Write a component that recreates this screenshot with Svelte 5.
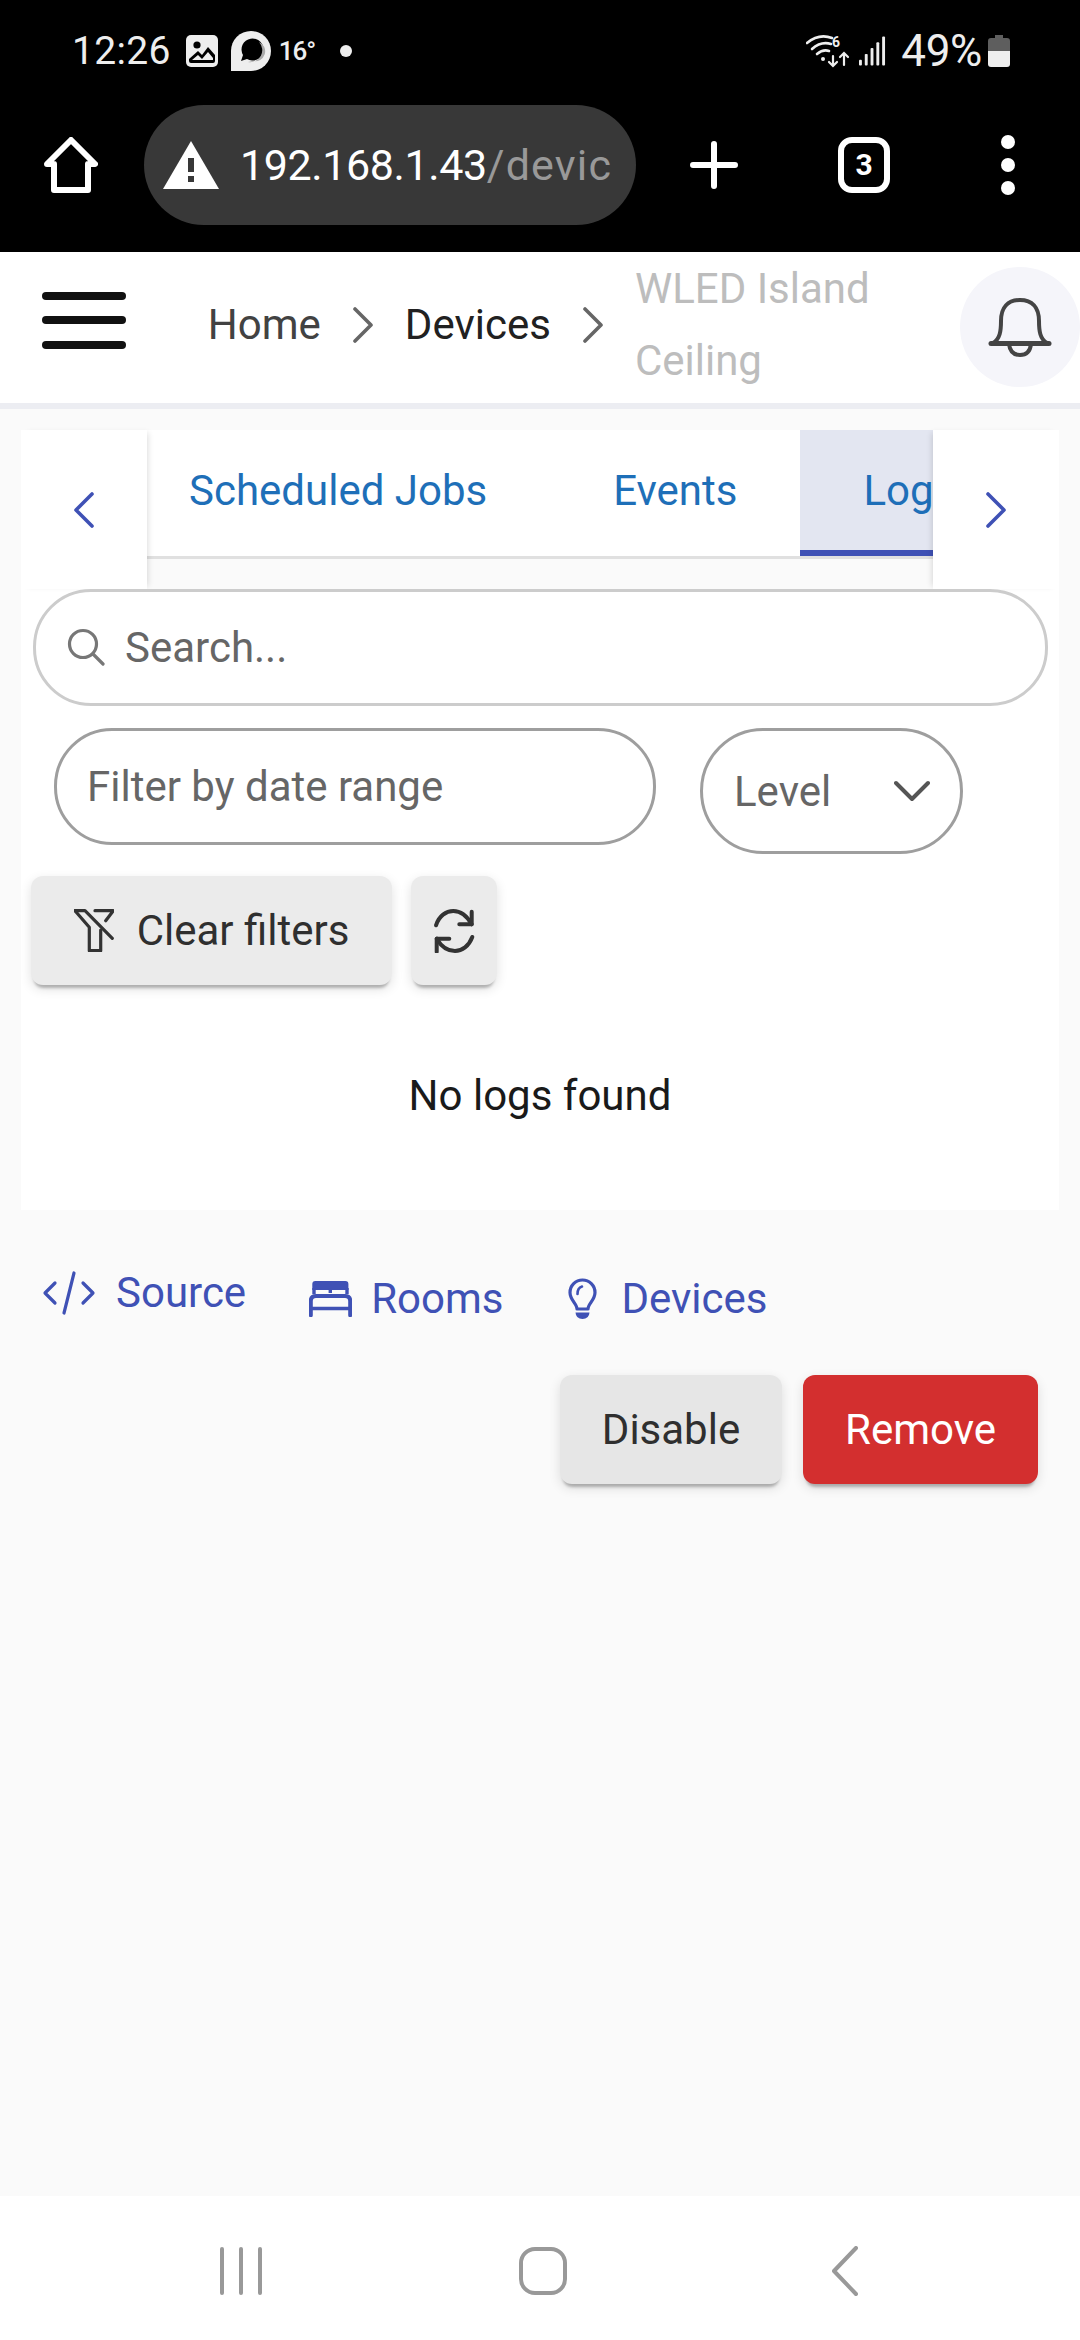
<script>
  const tabs = ['Scheduled Jobs', 'Events', 'Logs'];
</script>

<div class="screen">
  <div class="status">
    <div class="st-left">
      <span class="time">12:26</span>
      <svg class="ic-photo" viewBox="0 0 32 32"><rect width="32" height="32" rx="5" fill="#eee"/><circle cx="11" cy="10" r="3.6" fill="#000"/><path d="M3 26 L3 24 L12 16 L16 20 L22 12 L29 20 L29 26 Q29 28 27 28 L5 28 Q3 28 3 26Z" fill="#000"/><path d="M6 25 L12 20 L16 24 L22 17 L27 23 L27 25Z" fill="#eee"/></svg>
      <svg class="ic-chat" viewBox="0 0 40 40"><path d="M0 40 V20 A20 20 0 1 1 20 40Z" fill="#eee"/><path d="M10 30 L12 24 A11 11 0 1 1 16 28Z" fill="#000"/><path d="M28 11 A12 12 0 0 1 17 31 L22 30 A10 10 0 0 0 28 11Z" fill="#aaa"/></svg>
      <span class="temp">16°</span>
      <span class="dot"></span>
    </div>
    <div class="st-right">
      <svg class="ic-wifi" viewBox="0 0 44 34" fill="none" stroke="#eee" stroke-linecap="round"><path d="M1 9 Q13 -1 26 4" stroke-width="2.6"/><path d="M6 15 Q15 7 25 10" stroke-width="2.6"/><path d="M11 20 Q17 15 23 17" stroke-width="2.6"/><circle cx="17" cy="25" r="2" fill="#eee" stroke="none"/><path d="M27 22 V31 M23 28 L27 32 L31 28" stroke-width="2.2"/><path d="M38 19 V31 M34 23 L38 19 L42 23" stroke-width="2.2"/><text x="26" y="13" font-size="14" font-weight="700" fill="#eee" stroke="none" font-family="Roboto, sans-serif">6</text></svg>
      <svg class="ic-signal" viewBox="0 0 28 30" fill="#eee"><rect x="0" y="24" width="3" height="6" rx="1"/><rect x="6" y="18" width="3" height="12" rx="1"/><rect x="12" y="12" width="3" height="18" rx="1"/><rect x="18" y="6" width="3" height="24" rx="1"/><rect x="24" y="0" width="3" height="30" rx="1"/></svg>
      <span class="batt">49%</span>
      <svg class="ic-batt" viewBox="0 0 22 32"><path d="M7 0 H15 V3 H19 Q22 3 22 6 V16 H0 V6 Q0 3 3 3 H7Z" fill="#5e5e5e"/><path d="M0 16 H22 V29 Q22 32 19 32 H3 Q0 32 0 29Z" fill="#eee"/></svg>
    </div>
  </div>

  <div class="browser">
    <svg class="ic-home" viewBox="0 0 54 56" fill="none" stroke="#fff" stroke-width="6" stroke-linejoin="round"><path d="M27 3 L51 27 H44 V53 H10 V27 H3Z"/></svg>
    <div class="url">
      <svg class="ic-warn" viewBox="0 0 56 48"><path d="M28 0 L56 48 H0Z" fill="#fff"/><rect x="25" y="17" width="6" height="14" fill="#383838"/><rect x="25" y="35" width="6" height="6" fill="#383838"/></svg>
      <span class="host">192.168.1.43</span><span class="path">/devic</span>
    </div>
    <svg class="ic-plus" viewBox="0 0 48 48" stroke="#fff" stroke-width="6" stroke-linecap="round"><path d="M24 3 V45 M3 24 H45"/></svg>
    <div class="tabcount">3</div>
    <div class="menu"><i></i><i></i><i></i></div>
  </div>

  <header class="head">
    <div class="burger"><i></i><i></i><i></i></div>
    <nav class="crumbs">
      <span class="c-home">Home</span>
      <svg class="chev" viewBox="0 0 22 36" fill="none" stroke="#666" stroke-width="3.6" stroke-linecap="round" stroke-linejoin="round"><path d="M3 2 L19 18 L3 34"/></svg>
      <span class="c-dev">Devices</span>
      <svg class="chev" viewBox="0 0 22 36" fill="none" stroke="#666" stroke-width="3.6" stroke-linecap="round" stroke-linejoin="round"><path d="M3 2 L19 18 L3 34"/></svg>
      <span class="c-cur">WLED Island Ceiling</span>
    </nav>
    <div class="bell">
      <svg viewBox="0 0 64 60" fill="none" stroke="#444" stroke-width="4" stroke-linecap="round" stroke-linejoin="round"><path d="M3 46.5 H61" stroke-width="5"/><path d="M5 46 C12 42 13 34 13 24 C13 10 20 3 32 3 C44 3 51 10 51 24 C51 34 52 42 59 46"/><path d="M21 47 C22 56 27 58 32 58 C37 58 42 56 43 47"/></svg>
    </div>
  </header>

  <main class="main">
    <section class="card">
      <div class="tabbar">
        <div class="scroll-btn">
          <svg viewBox="0 0 22 36" fill="none" stroke="#3f51b5" stroke-width="3.6" stroke-linecap="round" stroke-linejoin="round"><path d="M19 2 L3 18 L19 34"/></svg>
        </div>
        <div class="tabs-wrap">
          <div class="tabs">
            {#each tabs as t, i}
              <div class="tab" class:active={i === 2}>{t}</div>
            {/each}
          </div>
        </div>
        <div class="scroll-btn right">
          <svg viewBox="0 0 22 36" fill="none" stroke="#3f51b5" stroke-width="3.6" stroke-linecap="round" stroke-linejoin="round"><path d="M3 2 L19 18 L3 34"/></svg>
        </div>
      </div>

      <div class="search">
        <svg viewBox="0 0 38 38" fill="none" stroke="#777" stroke-width="3.2" stroke-linecap="round"><circle cx="16" cy="16" r="13.5"/><path d="M26 26 L36 36"/></svg>
        <span>Search...</span>
      </div>

      <div class="filters">
        <div class="date">Filter by date range</div>
        <div class="level">
          <span>Level</span>
          <svg viewBox="0 0 36 22" fill="none" stroke="#555" stroke-width="4" stroke-linecap="round" stroke-linejoin="round"><path d="M2 3 L18 19 L34 3"/></svg>
        </div>
      </div>

      <div class="actions">
        <button class="btn clear">
          <svg viewBox="0 0 40 43" fill="none" stroke="#333" stroke-width="3.2" stroke-linecap="round" stroke-linejoin="round"><path d="M1 1.7 H11 L38.3 29.3"/><path d="M1 1.7 L15.3 18.3 V41.7 H26.7 V21"/><path d="M21 1.7 H39.3 L31.7 11.7"/></svg>
          Clear filters
        </button>
        <button class="btn refresh">
          <svg viewBox="0 0 42 44" fill="none" stroke="#333" stroke-width="4" stroke-linecap="round" stroke-linejoin="round"><path d="M3 16.3 C6 7 13 2 20.3 2 C28 2 34 7 38.7 15.3"/><path d="M38.7 2.7 V15.3 H26.3"/><path d="M39.3 28 C36 37 29 42 22 42 C14 42 8 37 3.7 29.7"/><path d="M3.7 42.7 V29.7 H16.3"/></svg>
        </button>
      </div>

      <p class="empty">No logs found</p>
    </section>

    <div class="links">
      <a class="lnk src">
        <svg class="i-code" viewBox="0 0 54 44" fill="none" stroke="#3f51b5" stroke-width="3.2" stroke-linecap="round" stroke-linejoin="round"><path d="M13 12 L3 22 L13 32 M41 12 L51 22 L41 32 M32 2 L22 42"/></svg>
        Source
      </a>
      <a class="lnk">
        <svg class="i-bed" viewBox="0 0 43 36" fill="none" stroke="#3f51b5" stroke-linecap="round"><path d="M3.3 9 V3 Q3.3 0 6.3 0 H36.4 Q39.4 0 39.4 3 V9Z" fill="#3f51b5" stroke="none"/><path d="M5 7 V13 M38 7 V13 M21.3 7 V12" stroke-width="3.4" stroke-linecap="butt"/><path d="M1.8 34.2 V20 Q1.8 15 7 15 H36 Q41.2 15 41.2 20 V34.2" stroke-width="4"/><path d="M1.8 27.5 H41.2" stroke-width="3.6" stroke-linecap="butt"/></svg>
        Rooms
      </a>
      <a class="lnk">
        <svg class="i-bulb" viewBox="0 0 29 41" fill="none" stroke="#3f51b5" stroke-width="3.2" stroke-linejoin="round"><path d="M9 31 C9 26 2 22 2 14.5 A12.5 12.5 0 0 1 27 14.5 C27 22 20 26 20 31Z"/><path d="M9.5 16 Q9.5 10 14 8.6" stroke-width="2.6" stroke-linecap="round"/><path d="M7.5 34.5 H21.5 Q21 41 14.5 41 Q8 41 7.5 34.5Z" fill="#3f51b5" stroke="none"/></svg>
        Devices
      </a>
    </div>

    <div class="bottom-actions">
      <button class="btn disable">Disable</button>
      <button class="btn remove">Remove</button>
    </div>
  </main>

  <footer class="sysnav">
    <svg class="n-recent" viewBox="0 0 44 48" fill="none" stroke="#999" stroke-width="4" stroke-linecap="round"><path d="M3 2 V46 M22 2 V46 M41 2 V46"/></svg>
    <svg class="n-home" viewBox="0 0 48 48" fill="none" stroke="#999" stroke-width="4"><rect x="2" y="2" width="44" height="44" rx="14"/></svg>
    <svg class="n-back" viewBox="0 0 26 50" fill="none" stroke="#999" stroke-width="4" stroke-linecap="round" stroke-linejoin="round"><path d="M24 2 L2 25 L24 48"/></svg>
  </footer>
</div>

<style>
  :global(body) { margin: 0; background: #fafafa; }
  .screen {
    width: 1080px; height: 2340px; display: flex; flex-direction: column;
    font-family: Roboto, "Liberation Sans", sans-serif; background: #fafafa; overflow: hidden;
  }
  svg { display: block; flex: none; }

  .status { height: 100px; background: #000; color: #eee; display: flex; justify-content: space-between; align-items: center; padding: 2px 70px 0 72px; box-sizing: border-box; }
  .st-left, .st-right { display: flex; align-items: center; }
  .time { font-size: 39px; letter-spacing: 0.3px; margin-right: 15px; }
  .ic-photo { width: 32px; height: 32px; margin-right: 13px; }
  .ic-chat { width: 40px; height: 40px; margin-right: 8px; }
  .temp { font-size: 26px; font-weight: 500; letter-spacing: -1px; margin-right: 25px; }
  .dot { width: 12px; height: 12px; border-radius: 50%; background: #eee; }
  .ic-wifi { width: 44px; height: 34px; margin-right: 9px; }
  .ic-signal { width: 27px; height: 30px; margin-right: 15px; }
  .batt { font-size: 44px; margin-right: 6px; letter-spacing: -0.3px; }
  .ic-batt { width: 22px; height: 32px; }

  .browser { height: 152px; background: #000; display: flex; align-items: center; padding: 0 0 23px 44px; box-sizing: border-box; }
  .ic-home { width: 54px; height: 56px; margin-right: 46px; }
  .url { width: 492px; height: 120px; border-radius: 60px; background: #383838; display: flex; align-items: center; padding-left: 19px; box-sizing: border-box; font-size: 43px; }
  .ic-warn { width: 56px; height: 48px; margin-right: 21px; }
  .host { color: #fff; letter-spacing: -0.4px; }
  .path { color: #999; letter-spacing: 1.2px; }
  .ic-plus { width: 48px; height: 48px; margin-left: 54px; }
  .tabcount { width: 52px; height: 56px; margin-left: 100px; border: 6px solid #fff; border-radius: 14px; box-sizing: border-box; color: #fff; font-size: 30px; font-weight: 700; display: flex; align-items: center; justify-content: center; }
  .menu { margin-left: 111px; display: flex; flex-direction: column; gap: 9px; }
  .menu i { width: 14px; height: 14px; border-radius: 50%; background: #fff; display: block; }

  .head { height: 157px; background: #fff; border-bottom: 6px solid #ecedf2; box-sizing: border-box; display: flex; align-items: center; }
  .burger { margin: -15px 0 0 42px; width: 84px; display: flex; flex-direction: column; gap: 16.5px; }
  .burger i { height: 8px; border-radius: 4px; background: #111; display: block; }
  .crumbs { margin: -6px 0 0 82px; width: 752px; display: flex; align-items: center; font-size: 42px; color: #424242; }
  .c-dev { color: #212121; margin-left: 31px; }
  .chev { width: 22px; height: 36px; margin-left: 31px; }
  .c-cur { margin-left: 31px; width: 260px; line-height: 72px; color: #bdbdbd; }
  .bell { width: 120px; height: 120px; border-radius: 50%; background: #f5f5fa; margin: -2px 0 0 2px; display: flex; align-items: center; justify-content: center; }
  .bell svg { width: 64px; height: 60px; }

  .main { flex: 1; padding: 21px 21px 0; box-sizing: border-box; }
  .card { background: #fff; height: 780px; padding-bottom: 1px; box-sizing: border-box; }

  .tabbar { display: flex; height: 159px; background: #fff; }
  .scroll-btn { width: 126px; height: 159px; display: flex; align-items: center; justify-content: center; position: relative; z-index: 1; box-shadow: 4px 0 6px -3px rgba(0,0,0,.14); background: #fff; }
  .scroll-btn svg { width: 22px; height: 36px; }
  .scroll-btn.right { box-shadow: -4px 0 6px -3px rgba(0,0,0,.14); }
  .tabs-wrap { flex: 1; min-width: 0; overflow: hidden; background: #fafafa; }
  .tabs { display: flex; height: 129px; box-sizing: border-box; background: #fff; border-bottom: 3px solid #e0e0e0; }
  .tab { font-size: 42px; color: #1e6fb8; white-space: nowrap; padding: 36px 63px 0 62px; }
  .tab:first-child { padding: 36px 64px 0 42px; }
  .tab.active { background: #e3e6f1; border-bottom: 6px solid #3f51b5; margin-bottom: -3px; height: 126px; box-sizing: border-box; padding-left: 63px; }

  .search { margin: 0 0 0 12px; width: 1015px; height: 117px; border: 3px solid #ccc; border-radius: 58px; box-sizing: border-box; display: flex; align-items: center; font-size: 42px; color: #666; position: relative; z-index: 2; background: #fff; }
  .search svg { width: 38px; height: 38px; margin-left: 31px; margin-right: 20px; margin-top: -2px; }

  .filters { margin: 22px 0 0 33px; display: flex; align-items: flex-start; gap: 44px; }
  .date { width: 602px; height: 117px; border: 3px solid #9e9e9e; border-radius: 58px; box-sizing: border-box; display: flex; align-items: center; padding-left: 30px; font-size: 42px; color: #666; }
  .level { width: 263px; height: 126px; border: 3px solid #9e9e9e; border-radius: 63px; box-sizing: border-box; display: flex; align-items: center; justify-content: space-between; padding: 0 30px 0 31px; font-size: 42px; color: #666; }
  .level svg { width: 36px; height: 22px; }

  .actions { margin: 22px 0 0 10px; display: flex; gap: 19px; }
  .btn { border: 0; border-radius: 12px; font-family: inherit; font-size: 42px; color: #2f2f2f; background: #e8e8e8; box-shadow: 0 6px 3px -3px rgba(0,0,0,.25), 0 4px 12px rgba(0,0,0,.12); display: flex; align-items: center; justify-content: center; padding: 0; }
  .clear { width: 361px; height: 109px; gap: 23px; background: #ebebeb; }
  .clear svg { width: 40px; height: 43px; }
  .refresh { width: 86px; height: 109px; background: #ebebeb; }
  .refresh svg { width: 42px; height: 44px; }

  .empty { margin: 86px 0 0; text-align: center; font-size: 42px; line-height: 50px; color: #1a1a1a; }

  .links { display: flex; align-items: flex-end; margin: 58px 0 0 21px; font-size: 42px; color: #3f51b5; }
  .lnk { display: flex; align-items: center; gap: 19px; color: #3f51b5; }
  .lnk:nth-child(1) { margin-right: 63px; gap: 20px; }
  .lnk:nth-child(2) { margin-right: 65px; }
  .lnk:nth-child(3) { gap: 24px; }
  .lnk.src { margin-bottom: 6px; }
  .i-code { width: 54px; height: 44px; }
  .i-bed { width: 43px; height: 36px; }
  .i-bulb { width: 29px; height: 41px; }

  .bottom-actions { display: flex; justify-content: flex-end; gap: 21px; margin: 52px 21px 0 0; }
  .disable { width: 222px; height: 109px; background: #e6e6e6; }
  .remove { width: 235px; height: 109px; background: #d32f2f; color: #fff; }

  .sysnav { height: 144px; background: #fff; flex: none; display: flex; align-items: center; padding-top: 6px; box-sizing: border-box; }
  .n-recent { width: 44px; height: 48px; margin-left: 219px; }
  .n-home { width: 48px; height: 48px; margin-left: 256px; }
  .n-back { width: 26px; height: 50px; margin-left: 265px; }
</style>
